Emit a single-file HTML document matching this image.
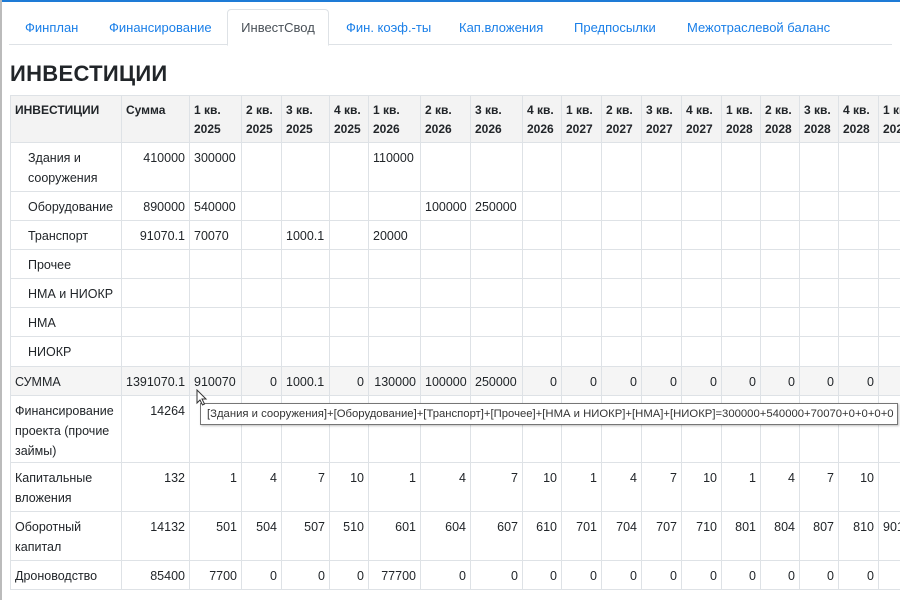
<!DOCTYPE html>
<html><head><meta charset="utf-8"><style>
html,body{margin:0;padding:0;width:900px;height:600px;overflow:hidden;background:#fff;font-family:"Liberation Sans","DejaVu Sans",sans-serif;color:#212529}
.topbar{position:absolute;left:0;top:0;width:900px;height:2px;background:#1e7bd6}
.leftbar{position:absolute;left:0;top:0;width:2px;height:600px;background:#bbb}
.tabs{position:absolute;left:9px;top:10px;width:883px;height:34px;border-bottom:1px solid #dee2e6}
.tab{position:absolute;top:10px;font-size:13px;color:#1a7fe8}
.active{position:absolute;left:218px;top:-1px;width:100px;height:35px;border:1px solid #dee2e6;border-bottom:1px solid #fff;border-radius:4px 4px 0 0;background:#fff;color:#495057;font-size:13px;text-align:center;line-height:36px}
h1{position:absolute;left:10px;top:61px;margin:0;font-size:22px;font-weight:bold;letter-spacing:0.3px}
table{position:absolute;left:10px;top:95px;width:928px;border-collapse:collapse;table-layout:fixed;font-size:12.5px}
td,th{border:1px solid #dee2e6;padding:5px 4px 0 4px;vertical-align:top;line-height:20px;overflow:hidden;white-space:nowrap}
th{text-align:left;background:#f3f3f3;font-weight:bold;height:41px;font-size:12px;line-height:19px;padding:5px 2px 0 4px}
td{text-align:right}
td.l{text-align:left;white-space:normal}
td.i{padding-left:17px}
.sum td{background:#f5f5f5}
.tip{position:absolute;left:200px;top:403px;width:698px;height:22px;border:1px solid #767676;background:#fff;font-size:11.3px;line-height:21px;padding-left:6px;color:#333;box-sizing:border-box;box-shadow:1px 1px 2px rgba(0,0,0,.25);white-space:nowrap;overflow:hidden}
</style></head><body>
<div class="topbar"></div><div class="leftbar"></div>
<div class="tabs">
<span class="tab" style="left:16px">Финплан</span>
<span class="tab" style="left:100px">Финансирование</span>
<div class="active">ИнвестСвод</div>
<span class="tab" style="left:337px">Фин. коэф.-ты</span>
<span class="tab" style="left:450px">Кап.вложения</span>
<span class="tab" style="left:565px">Предпосылки</span>
<span class="tab" style="left:678px">Межотраслевой баланс</span>
</div>
<h1>ИНВЕСТИЦИИ</h1>
<table>
<colgroup><col style="width:111px"><col style="width:68px"><col style="width:52px"><col style="width:40px"><col style="width:48px"><col style="width:39px"><col style="width:52px"><col style="width:50px"><col style="width:52px"><col style="width:39px"><col style="width:40px"><col style="width:40px"><col style="width:40px"><col style="width:40px"><col style="width:39px"><col style="width:39px"><col style="width:39px"><col style="width:40px"><col style="width:60px"></colgroup>
<tr><th>ИНВЕСТИЦИИ</th><th>Сумма</th><th>1 кв.<br>2025</th><th>2 кв.<br>2025</th><th>3 кв.<br>2025</th><th>4 кв.<br>2025</th><th>1 кв.<br>2026</th><th>2 кв.<br>2026</th><th>3 кв.<br>2026</th><th>4 кв.<br>2026</th><th>1 кв.<br>2027</th><th>2 кв.<br>2027</th><th>3 кв.<br>2027</th><th>4 кв.<br>2027</th><th>1 кв.<br>2028</th><th>2 кв.<br>2028</th><th>3 кв.<br>2028</th><th>4 кв.<br>2028</th><th>1 кв.<br>2029</th></tr>
<tr style="height:49px"><td class="l i">Здания и сооружения</td><td>410000</td><td class="l">300000</td><td></td><td></td><td></td><td class="l">110000</td><td></td><td></td><td></td><td></td><td></td><td></td><td></td><td></td><td></td><td></td><td></td><td></td></tr>
<tr style="height:29px"><td class="l i">Оборудование</td><td>890000</td><td class="l">540000</td><td></td><td></td><td></td><td></td><td class="l">100000</td><td class="l">250000</td><td></td><td></td><td></td><td></td><td></td><td></td><td></td><td></td><td></td><td></td></tr>
<tr style="height:29px"><td class="l i">Транспорт</td><td>91070.1</td><td class="l">70070</td><td></td><td class="l">1000.1</td><td></td><td class="l">20000</td><td></td><td></td><td></td><td></td><td></td><td></td><td></td><td></td><td></td><td></td><td></td><td></td></tr>
<tr style="height:29px"><td class="l i">Прочее</td><td></td><td></td><td></td><td></td><td></td><td></td><td></td><td></td><td></td><td></td><td></td><td></td><td></td><td></td><td></td><td></td><td></td><td></td></tr>
<tr style="height:29px"><td class="l i">НМА и НИОКР</td><td></td><td></td><td></td><td></td><td></td><td></td><td></td><td></td><td></td><td></td><td></td><td></td><td></td><td></td><td></td><td></td><td></td><td></td></tr>
<tr style="height:29px"><td class="l i">НМА</td><td></td><td></td><td></td><td></td><td></td><td></td><td></td><td></td><td></td><td></td><td></td><td></td><td></td><td></td><td></td><td></td><td></td><td></td></tr>
<tr style="height:30px"><td class="l i">НИОКР</td><td></td><td></td><td></td><td></td><td></td><td></td><td></td><td></td><td></td><td></td><td></td><td></td><td></td><td></td><td></td><td></td><td></td><td></td></tr>
<tr class="sum" style="height:29px"><td class="l">СУММА</td><td>1391070.1</td><td class="l">910070</td><td>0</td><td class="l">1000.1</td><td>0</td><td>130000</td><td>100000</td><td class="l">250000</td><td>0</td><td>0</td><td>0</td><td>0</td><td>0</td><td>0</td><td>0</td><td>0</td><td>0</td><td></td></tr>
<tr style="height:67px"><td class="l">Финансирование проекта (прочие займы)</td><td>14264</td><td></td><td></td><td></td><td></td><td></td><td></td><td></td><td></td><td></td><td></td><td></td><td></td><td></td><td></td><td></td><td></td><td></td></tr>
<tr style="height:49px"><td class="l">Капитальные вложения</td><td>132</td><td>1</td><td>4</td><td>7</td><td>10</td><td>1</td><td>4</td><td>7</td><td>10</td><td>1</td><td>4</td><td>7</td><td>10</td><td>1</td><td>4</td><td>7</td><td>10</td><td></td></tr>
<tr style="height:49px"><td class="l">Оборотный капитал</td><td>14132</td><td>501</td><td>504</td><td>507</td><td>510</td><td>601</td><td>604</td><td>607</td><td>610</td><td>701</td><td>704</td><td>707</td><td>710</td><td>801</td><td>804</td><td>807</td><td>810</td><td class="l">901</td></tr>
<tr style="height:29px"><td class="l">Дроноводство</td><td>85400</td><td>7700</td><td>0</td><td>0</td><td>0</td><td>77700</td><td>0</td><td>0</td><td>0</td><td>0</td><td>0</td><td>0</td><td>0</td><td>0</td><td>0</td><td>0</td><td>0</td><td></td></tr>
</table>
<div class="tip">[Здания и сооружения]+[Оборудование]+[Транспорт]+[Прочее]+[НМА и НИОКР]+[НМА]+[НИОКР]=300000+540000+70070+0+0+0+0</div>
<svg style="position:absolute;left:196px;top:389px" width="12" height="18" viewBox="0 0 12 18"><path d="M1 1 L1 14 L4 11 L6.5 16 L8.5 15 L6 10 L10 10 Z" fill="#fff" stroke="#333" stroke-width="1"/></svg>
</body></html>
